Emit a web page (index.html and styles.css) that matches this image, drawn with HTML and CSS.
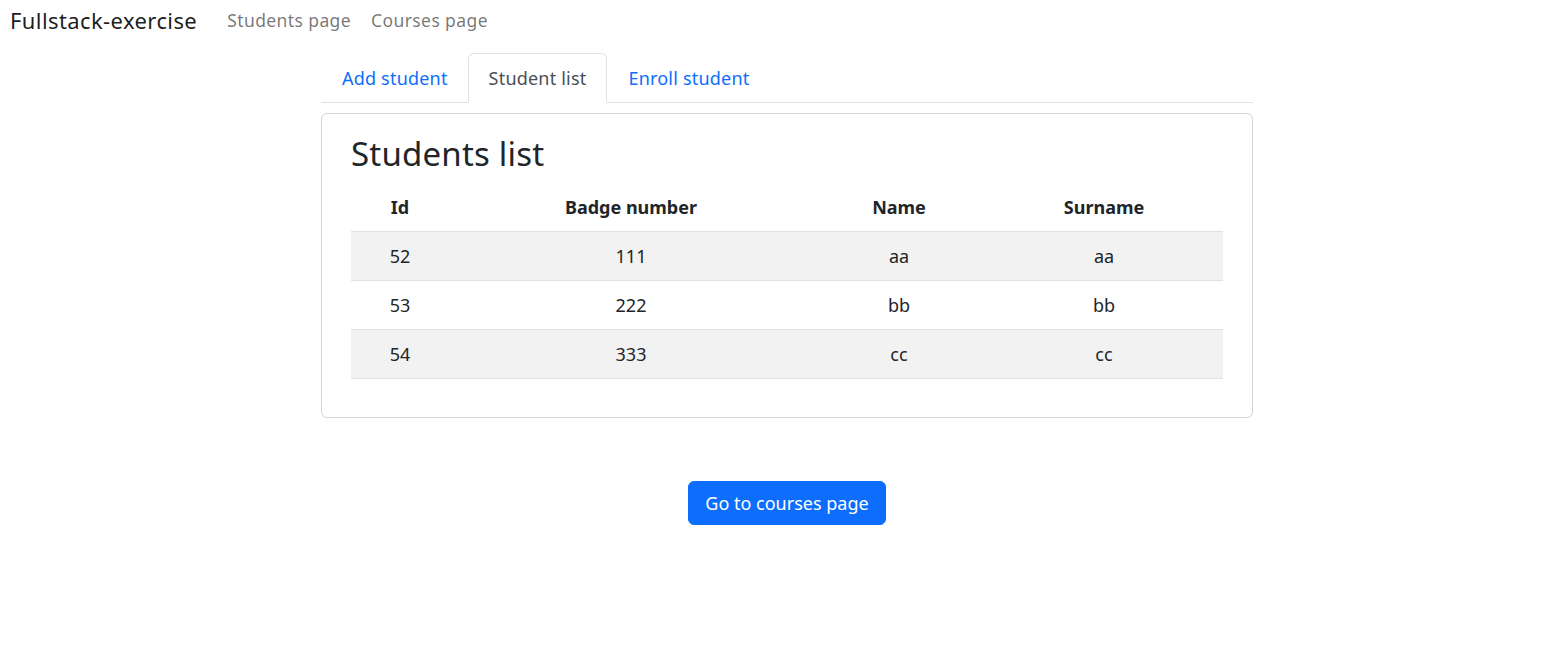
FILE: index.html
```html
<!DOCTYPE html>
<html lang="en">
<head>
<meta charset="utf-8">
<title>Fullstack-exercise</title>
<link rel="stylesheet" href="styles.css">
</head>
<body>
<nav class="navbar">
  <a class="brand" href="#">Fullstack-exercise</a>
  <a class="nav-link" href="#">Students page</a>
  <a class="nav-link" href="#">Courses page</a>
</nav>
<main class="wrapper">
  <ul class="tabs">
    <li><a class="tab" href="#">Add student</a></li>
    <li><a class="tab active" href="#">Student list</a></li>
    <li><a class="tab" href="#">Enroll student</a></li>
  </ul>
  <section class="card">
    <h2 class="card-title">Students list</h2>
    <table class="table">
      <colgroup>
        <col class="col-id">
        <col class="col-badge">
        <col class="col-name">
        <col class="col-surname">
      </colgroup>
      <thead>
        <tr><th>Id</th><th>Badge number</th><th>Name</th><th>Surname</th></tr>
      </thead>
      <tbody>
        <tr class="odd"><td>52</td><td>111</td><td>aa</td><td>aa</td></tr>
        <tr><td>53</td><td>222</td><td>bb</td><td>bb</td></tr>
        <tr class="odd"><td>54</td><td>333</td><td>cc</td><td>cc</td></tr>
      </tbody>
    </table>
  </section>
  <div class="actions">
    <button class="btn" type="button">Go to courses page</button>
  </div>
</main>
</body>
</html>
```
FILE: styles.css
```css
* { box-sizing: border-box; }
html, body { margin: 0; padding: 0; background: #fff; }
body {
  font-family: "Noto Sans", "Open Sans", sans-serif;
  font-size: 18px;
  color: #212529;
}
a { text-decoration: none; }

.navbar {
  display: flex;
  align-items: center;
  height: 40px;
  padding: 0 10px;
}
.brand {
  font-size: 22px;
  letter-spacing: 0.4px;
  color: rgba(0,0,0,0.9);
  margin-right: 30px;
}
.nav-link {
  font-size: 17.5px;
  letter-spacing: 0.4px;
  color: rgba(0,0,0,0.55);
  margin-right: 20px;
}

.wrapper {
  width: 932px;
  margin: 13px 0 0 321px;
}

.tabs {
  list-style: none;
  margin: 0;
  padding: 0;
  display: flex;
  border-bottom: 1px solid #dee2e6;
  height: 50px;
}
.tabs li { margin-bottom: -1px; }
.tab {
  display: block;
  height: 50px;
  line-height: 48px;
  padding: 0 20px;
  font-size: 18px;
  letter-spacing: 0.2px;
  color: #0d6efd;
  border: 1px solid transparent;
  border-radius: 6px 6px 0 0;
}
.tabs li:first-child .tab { padding-right: 19px; }
.tab.active {
  color: #495057;
  background: #fff;
  border-color: #dee2e6 #dee2e6 #fff;
}

.card {
  margin-top: 10px;
  border: 1px solid #d3d3d3;
  border-radius: 6px;
  padding: 20px 29px 38px;
}
.card-title {
  margin: 0 0 10px;
  font-size: 33px;
  letter-spacing: 0.2px;
  font-weight: 400;
  line-height: 40px;
  color: #212529;
}

.table {
  width: 100%;
  border-collapse: collapse;
  table-layout: fixed;
  font-size: 18px;
}
.col-id { width: 98px; }
.col-badge { width: 364px; }
.col-name { width: 172px; }
.col-surname { width: 238px; }
.table th, .table td {
  text-align: center;
  height: 49px;
  padding: 0 8px;
  border-bottom: 1px solid #dee2e6;
}
.table th { font-weight: 700; height: 47px; }
.table tr.odd td { background: #f2f2f2; }

.actions {
  display: flex;
  justify-content: center;
  margin-top: 63px;
}
.btn {
  font-family: inherit;
  font-size: 18px;
  color: #fff;
  background: #0d6efd;
  border: 1px solid #0d6efd;
  border-radius: 6px;
  height: 44px;
  padding: 0 16px;
  cursor: pointer;
}
```
